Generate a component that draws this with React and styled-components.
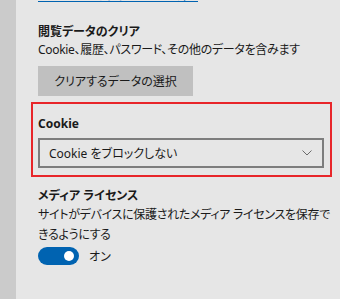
import styled, { createGlobalStyle } from "styled-components";

const GlobalStyle = createGlobalStyle`
  *, *::before, *::after {
    box-sizing: border-box;
  }
  html, body {
    margin: 0;
    padding: 0;
    background: #e6e6e6;
  }
  body {
    font-family: "Noto Sans", "Noto Sans CJK JP", sans-serif;
    font-feature-settings: "palt";
    color: #1a1a1a;
  }
`;

const Page = styled.div`
  display: flex;
  width: 340px;
  height: 299px;
  overflow: hidden;
  background: #e6e6e6;
`;

const Strip = styled.div`
  width: 16px;
  flex: none;
  background: #cbcbcb;
`;

const Content = styled.div`
  flex: 1;
  padding-left: 22px;
  display: flex;
  flex-direction: column;
`;

const TopLink = styled.a`
  display: block;
  width: 160px;
  margin-top: -11px;
  font-size: 12px;
  line-height: 14px;
  color: #0063b1;
  text-decoration: underline;
  white-space: nowrap;
  overflow: hidden;
`;

const Heading = styled.div`
  font-size: 12px;
  font-weight: 700;
  line-height: 18px;
  margin-top: ${(p) => p.$top || 0}px;
`;

const Text = styled.div`
  font-size: 12px;
  letter-spacing: -0.3px;
  line-height: ${(p) => p.$line || 18}px;
  width: 300px;
`;

const GrayButton = styled.div`
  width: 155px;
  height: 30px;
  margin-top: 7px;
  background: #c0c0c0;
  font-size: 12px;
  display: flex;
  align-items: center;
  justify-content: center;
`;

const Highlight = styled.section`
  margin: 6px 0 0 -7px;
  width: 301px;
  border: 2px solid #e8262a;
  padding: 11px 0 7px 5px;
  display: flex;
  flex-direction: column;
`;

const Select = styled.div`
  margin-top: 5px;
  width: 286px;
  height: 30px;
  border: 2px solid #7d7d7d;
  display: flex;
  align-items: center;
  justify-content: space-between;
  padding: 0 10px 0 9px;
  font-size: 12px;
`;

const ToggleRow = styled.div`
  display: flex;
  align-items: center;
  gap: 10px;
  margin-top: 2px;
  font-size: 12px;
`;

const Track = styled.div`
  width: 41px;
  height: 18px;
  border-radius: 9px;
  background: #0063b1;
  display: flex;
  align-items: center;
  justify-content: flex-end;
  padding-right: 5px;
`;

const Knob = styled.div`
  width: 10px;
  height: 10px;
  border-radius: 50%;
  background: #ffffff;
`;

const Chevron = () => (
  <svg width="10" height="6" viewBox="0 0 10 6">
    <path d="M0.5 0.5 L5 5 L9.5 0.5" fill="none" stroke="#6b6b6b" strokeWidth="1" />
  </svg>
);

export default function App() {
  return (
    <Page>
      <GlobalStyle />
      <Strip />
      <Content>
        <TopLink>Microsoft のプライバシーの声明</TopLink>
        <Heading $top={20}>閲覧データのクリア</Heading>
        <Text>Cookie、履歴、パスワード、その他のデータを含みます</Text>
        <GrayButton>クリアするデータの選択</GrayButton>
        <Highlight>
          <Heading>Cookie</Heading>
          <Select>
            <span>Cookie をブロックしない</span>
            <Chevron />
          </Select>
        </Highlight>
        <Heading $top={10}>メディア ライセンス</Heading>
        <Text $line={20}>サイトがデバイスに保護されたメディア ライセンスを保存できるようにする</Text>
        <ToggleRow>
          <Track>
            <Knob />
          </Track>
          <span>オン</span>
        </ToggleRow>
      </Content>
    </Page>
  );
}
